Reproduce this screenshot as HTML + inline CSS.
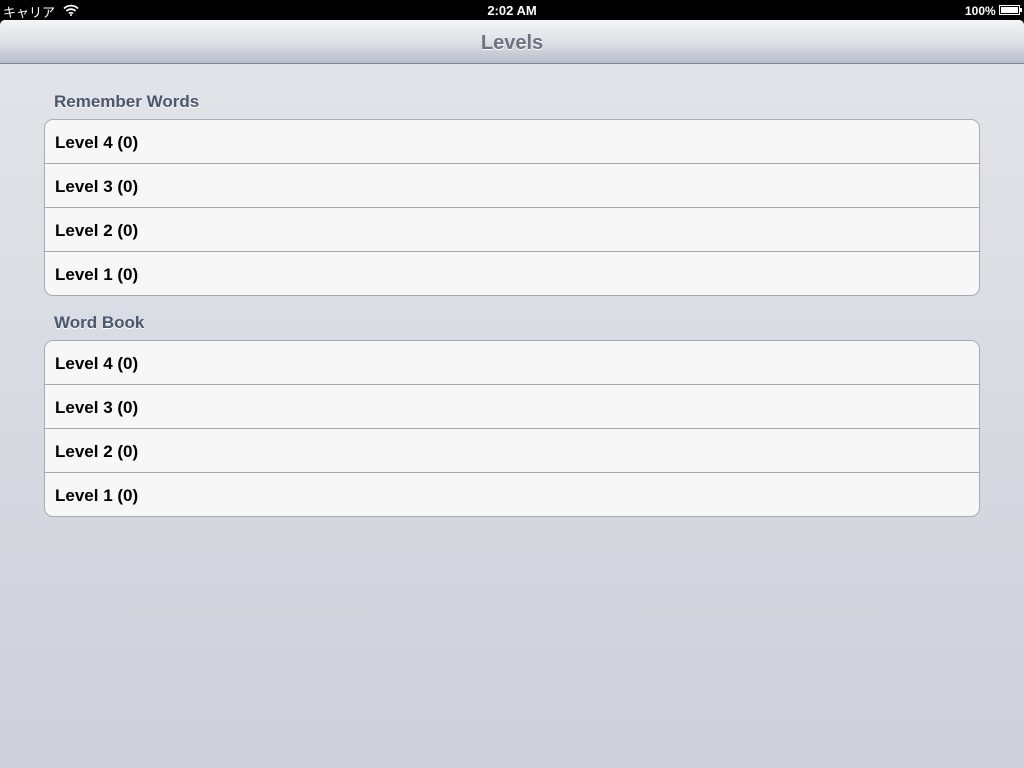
<!DOCTYPE html>
<html><head><meta charset="utf-8"><style>
*{margin:0;padding:0;box-sizing:border-box}
body{width:1024px;height:768px;overflow:hidden;background:#000;font-family:"Liberation Sans","Noto Sans CJK JP",sans-serif;position:relative}
.status{position:absolute;top:0;left:0;width:1024px;height:20px;color:#fff;font-size:13px}
.main{position:absolute;top:20px;left:0;width:1024px;height:748px;background:linear-gradient(#e3e5ea,#cdd0d9);border-radius:5px 5px 0 0;overflow:hidden}
.nav{height:44px;background:linear-gradient(#f4f5f7,#dfe1e6 50%,#b9bdc9);border-bottom:1px solid #7d8596;text-align:center;font-weight:bold;font-size:20px;color:#6d7380;line-height:46px;text-shadow:0 1px 0 #fff}
.hdr{position:absolute;left:54px;font-weight:bold;font-size:17px;color:#4c566c;text-shadow:0 1px 0 #fff}
.grp{position:absolute;left:44px;width:936px;background:#f7f7f7;border:1px solid #a9abb0;border-radius:9px;overflow:hidden}
.row{height:44px;border-top:1px solid #a9abb0;font-weight:bold;font-size:17px;line-height:45px;padding-left:10px;color:#000}
.row:first-child{border-top:none;height:43px;line-height:45px}
</style></head><body>
<div class="status">
<span style="position:absolute;left:3px;top:2px;font-size:13px">キャリア</span>
<svg style="position:absolute;left:63px;top:4px" width="16" height="12" viewBox="0 0 16 12"><path d="M1 4.5A10 10 0 0 1 15 4.5M3.5 7A6.5 6.5 0 0 1 12.5 7M6 9.5A3 3 0 0 1 10 9.5" stroke="#fff" stroke-width="1.8" fill="none"/><circle cx="8" cy="11" r="1" fill="#fff"/></svg>
<span style="position:absolute;left:0;width:1024px;text-align:center;top:3px;font-weight:bold;font-size:13px">2:02 AM</span>
<span style="position:absolute;left:965px;top:4px;font-weight:bold;font-size:12px">100%</span>
<div style="position:absolute;left:999px;top:5px;width:21px;height:10px;border:1px solid #fff;padding:1px"><div style="background:#fff;width:100%;height:100%"></div></div>
<div style="position:absolute;left:1020px;top:8px;width:2px;height:4px;background:#fff"></div>
</div>
<div class="main">
<div class="nav">Levels</div>
<div class="hdr" style="top:72px">Remember Words</div>
<div class="grp" style="top:99px"><div class="row">Level 4 (0)</div><div class="row">Level 3 (0)</div><div class="row">Level 2 (0)</div><div class="row">Level 1 (0)</div></div>
<div class="hdr" style="top:293px">Word Book</div>
<div class="grp" style="top:320px"><div class="row">Level 4 (0)</div><div class="row">Level 3 (0)</div><div class="row">Level 2 (0)</div><div class="row">Level 1 (0)</div></div>
</div>
</body></html>
